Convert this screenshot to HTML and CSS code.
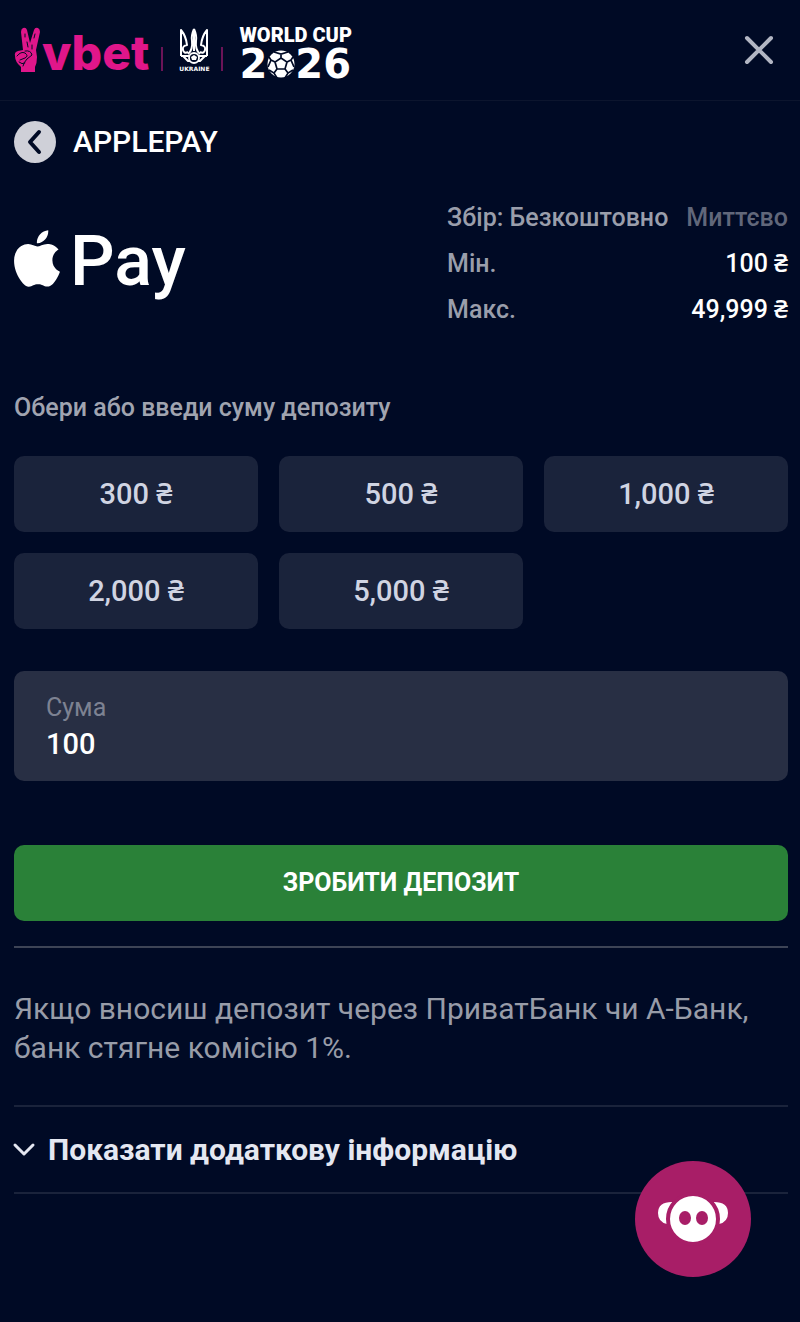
FILE: index.html
```html
<!DOCTYPE html>
<html lang="uk">
<head>
<meta charset="utf-8">
<meta name="viewport" content="width=device-width, initial-scale=1">
<title>ApplePay</title>
<link rel="stylesheet" href="styles.css">
</head>
<body>
<header class="topbar">
  <a class="brand" href="#" aria-label="vbet">
    <svg class="brand-hand" viewBox="0 0 26 46" aria-hidden="true">
      <path fill="#e0168a" d="M9 1q3-1 4 2l3 13 4-13q1-3 4-2 2 1 2 4l-4 18 1 7q0 6-2 10v5H7v-5Q1 35 1 29q-1-4 3-5l5-1L7 5q0-3 2-4z"/>
      <path fill="none" stroke="#000a25" stroke-width="1" stroke-linecap="round" d="M3 29q4-5 8-3 4 3 0 5l-5 2M11 24q6-1 7 4l-5 4q-3 3-4 7M5 35q3 3 6 1M11 7v3M21 7l-1 4M13 15l1 5M18 18v4"/>
    </svg>
    <span class="brand-name">vbet</span>
  </a>
  <span class="divider"></span>
  <span class="team">
    <svg class="team-crest" viewBox="0 0 30 38" aria-hidden="true">
      <g fill="none" stroke="#fff" stroke-width="2" stroke-linejoin="round">
        <path d="M15 2q3 7 2 12-1 9 4 13M15 2q-3 7-2 12 1 9-4 13M15 5v19"/>
        <path d="M2 29V3q5 6 6 15-5 1-4 5t5 2M28 29V3q-5 6-6 15 5 1 4 5t-5 2M2 29h8M20 29h8M4 29l5 5h12l5-5"/>
      </g>
      <circle cx="15" cy="31" r="5" fill="#000a25" stroke="#fff" stroke-width="1.8"/>
      <path fill="#fff" d="M15 28l3 2-1 3h-4l-1-3z"/>
    </svg>
    <span class="team-name">UKRAINE</span>
  </span>
  <span class="divider"></span>
  <span class="cup">
    <span class="cup-title">WORLD CUP</span>
    <span class="cup-year">2<svg class="cup-ball" viewBox="0 0 28 28" role="img" aria-label="0">
      <circle cx="14" cy="14" r="13.5" fill="#fff"/>
      <path fill="none" stroke="#000a25" stroke-width="1.7" d="M14 8l6 4-2 7h-8l-2-7zM14 8V4M20 12l4-2M18 19l3 4M10 19l-3 4M8 12l-4-2M7 2l7 2 7-2M26 7l-2 3 3 7M26 20l-5 3-3 5M10 28l-3-5-5-3M1 17l3-7-2-3"/>
    </svg>26</span>
  </span>
  <button class="close" type="button" aria-label="Закрити">
    <svg viewBox="0 0 30 30" aria-hidden="true"><path d="M3 3l24 24M27 3L3 27"/></svg>
  </button>
</header>

<main class="page">
  <div class="heading">
    <button class="back" type="button" aria-label="Назад">
      <svg viewBox="0 0 42 42" aria-hidden="true"><path d="M25 11L16 21l9 10"/></svg>
    </button>
    <h1 class="title">APPLEPAY</h1>
  </div>

  <section class="method">
    <div class="pay-logo">
      <svg class="pay-apple" viewBox="2.2 0 19.6 24" aria-hidden="true"><path fill="#fff" d="M12.152 6.896c-.948 0-2.415-1.078-3.96-1.04-2.04.027-3.91 1.183-4.961 3.014-2.117 3.675-.546 9.103 1.519 12.09 1.013 1.454 2.208 3.09 3.792 3.039 1.52-.065 2.09-.987 3.935-.987 1.831 0 2.35.987 3.96.948 1.637-.026 2.676-1.48 3.676-2.948 1.156-1.688 1.636-3.325 1.662-3.415-.039-.013-3.182-1.221-3.22-4.857-.026-3.04 2.48-4.494 2.597-4.559-1.429-2.09-3.623-2.324-4.39-2.376-2-.156-3.675 1.09-4.61 1.09zM15.53 3.83c.843-1.012 1.4-2.427 1.245-3.83-1.207.052-2.662.805-3.532 1.818-.78.896-1.454 2.338-1.273 3.714 1.338.104 2.715-.688 3.559-1.701"/></svg>
      <span class="pay-word">Pay</span>
    </div>
    <div class="limits">
      <div class="limit"><span>Збір: Безкоштовно</span><span class="speed">Миттєво</span></div>
      <div class="limit"><span>Мін.</span><span class="value">100 ₴</span></div>
      <div class="limit"><span>Макс.</span><span class="value">49,999 ₴</span></div>
    </div>
  </section>

  <form class="deposit">
    <p class="prompt">Обери або введи суму депозиту</p>
    <div class="amounts">
      <button class="amount" type="button">300 ₴</button>
      <button class="amount" type="button">500 ₴</button>
      <button class="amount" type="button">1,000 ₴</button>
      <button class="amount" type="button">2,000 ₴</button>
      <button class="amount" type="button">5,000 ₴</button>
    </div>
    <div class="field">
      <label class="field-label" for="sum">Сума</label>
      <input class="field-input" id="sum" type="text" inputmode="numeric" value="100">
    </div>
    <button class="submit" type="submit">ЗРОБИТИ ДЕПОЗИТ</button>
  </form>

  <p class="note">Якщо вносиш депозит через ПриватБанк чи А-Банк, банк стягне комісію 1%.</p>

  <button class="more" type="button" aria-expanded="false">
    <svg class="more-icon" viewBox="0 0 20 12" aria-hidden="true"><path d="M1 1l9 9 9-9"/></svg>
    <span>Показати додаткову інформацію</span>
  </button>
</main>

<button class="chat" type="button" aria-label="Чат">
  <svg viewBox="0 0 116 116" aria-hidden="true">
    <path fill="#fff" d="M23 52q0-11 14-11v21q-3 1-5 1-9-2-9-11zM93 52q0-11-14-11v21q3 1 5 1 9-2 9-11z"/>
    <circle cx="58" cy="58" r="25" fill="#fff" stroke="#a81e67" stroke-width="4"/>
    <ellipse cx="50" cy="57" rx="6" ry="7" fill="#a81e67"/><ellipse cx="67" cy="57" rx="6" ry="7" fill="#a81e67"/>
  </svg>
</button>
</body>
</html>
```
FILE: styles.css
```css
* { box-sizing: border-box; }

body {
  margin: 0;
  min-height: 100vh;
  background: #000a25;
  color: #fff;
  font-family: Roboto, "Noto Sans", sans-serif;
  font-size: 25px;
  line-height: 32px;
}

button {
  margin: 0;
  padding: 0;
  border: 0;
  background: none;
  color: inherit;
  font: inherit;
  cursor: pointer;
}

svg { display: block; }
p, h1 { margin: 0; }

.topbar {
  display: flex;
  align-items: center;
  height: 101px;
  padding: 0 26px 0 14px;
  border-bottom: 1px solid #0c152e;
}

.brand {
  display: flex;
  align-items: center;
  gap: 2px;
  color: #e0168a;
  text-decoration: none;
}
.brand-hand { width: 26px; height: 46px; }
.brand-name { padding-top: 6px; font: 800 48px/48px Inter, sans-serif; }

.divider {
  width: 2px;
  height: 24px;
  margin: 18px 16px 0 12px;
  background: #6b1457;
}

.team { display: flex; flex-direction: column; align-items: center; }
.team-crest { width: 30px; height: 38px; }
.team-name { font: bold 6px/8px "DejaVu Sans", sans-serif; }

.cup { display: flex; flex-direction: column; gap: 2px; }
.cup-title { font: 900 20px/26px Roboto, sans-serif; }
.cup-year {
  display: flex;
  align-items: center;
  font: bold 40px/28px "DejaVu Sans", sans-serif;
}
.cup-ball { width: 28px; height: 28px; }

.close { margin-left: auto; }
.close svg { width: 30px; height: 30px; fill: none; stroke: #b2b6c3; stroke-width: 4; stroke-linecap: round; }

.page { padding: 20px 12px 0 14px; }

.heading { display: flex; align-items: center; gap: 17px; }
.back { border-radius: 50%; background: #cfd0d8; }
.back svg { width: 42px; height: 42px; fill: none; stroke: #000a25; stroke-width: 4; stroke-linecap: round; stroke-linejoin: round; }
.title { font-size: 30px; font-weight: 500; line-height: 40px; }

.method { display: flex; justify-content: space-between; align-items: center; margin-top: 39px; }
.pay-logo { display: flex; align-items: center; gap: 10px; margin-bottom: 12px; }
.pay-apple { width: 46px; height: 57px; }
.pay-word { padding-top: 6px; font-size: 70px; font-weight: 500; line-height: 72px; }

.limits { display: flex; flex-direction: column; gap: 14px; color: #9a9eab; font-weight: 500; }
.limit { display: flex; justify-content: space-between; gap: 18px; }
.speed { color: #61677a; }
.value { color: #fff; }

.prompt { margin-top: 66px; color: #a0a4b0; font-weight: 500; }

.amounts {
  display: grid;
  grid-template-columns: repeat(3, 1fr);
  gap: 21px;
  margin-top: 32px;
}
.amount {
  height: 76px;
  border-radius: 10px;
  background: #1a233b;
  color: #d0d4e2;
  font-size: 29px;
  font-weight: 500;
}

.field {
  display: flex;
  flex-direction: column;
  margin-top: 42px;
  padding: 21px 32px 17px;
  border-radius: 10px;
  background: #282f44;
}
.field-label { color: #7d8292; }
.field-input {
  width: 100%;
  height: 40px;
  padding: 0;
  border: 0;
  outline: 0;
  background: none;
  color: #fff;
  font: 500 29px/40px Roboto, sans-serif;
}

.submit {
  width: 100%;
  height: 76px;
  margin-top: 64px;
  border-radius: 10px;
  background: #2a8138;
  font-weight: 700;
}

.note {
  margin-top: 25px;
  padding: 41px 0 38px;
  border-top: 2px solid #3d4456;
  color: #989ca8;
  font-size: 30px;
  line-height: 39px;
}

.more {
  display: flex;
  align-items: center;
  gap: 14px;
  width: 100%;
  height: 89px;
  border: solid #1a233b;
  border-width: 2px 0;
  color: #e4e7f1;
  font-size: 30px;
  font-weight: 700;
}
.more-icon { width: 20px; height: 12px; overflow: visible; fill: none; stroke: #e4e7f1; stroke-width: 3; stroke-linecap: round; stroke-linejoin: round; }

.chat {
  position: fixed;
  right: 49px;
  bottom: 45px;
  border-radius: 50%;
  background: #a81e67;
}
.chat svg { width: 116px; height: 116px; }
```
